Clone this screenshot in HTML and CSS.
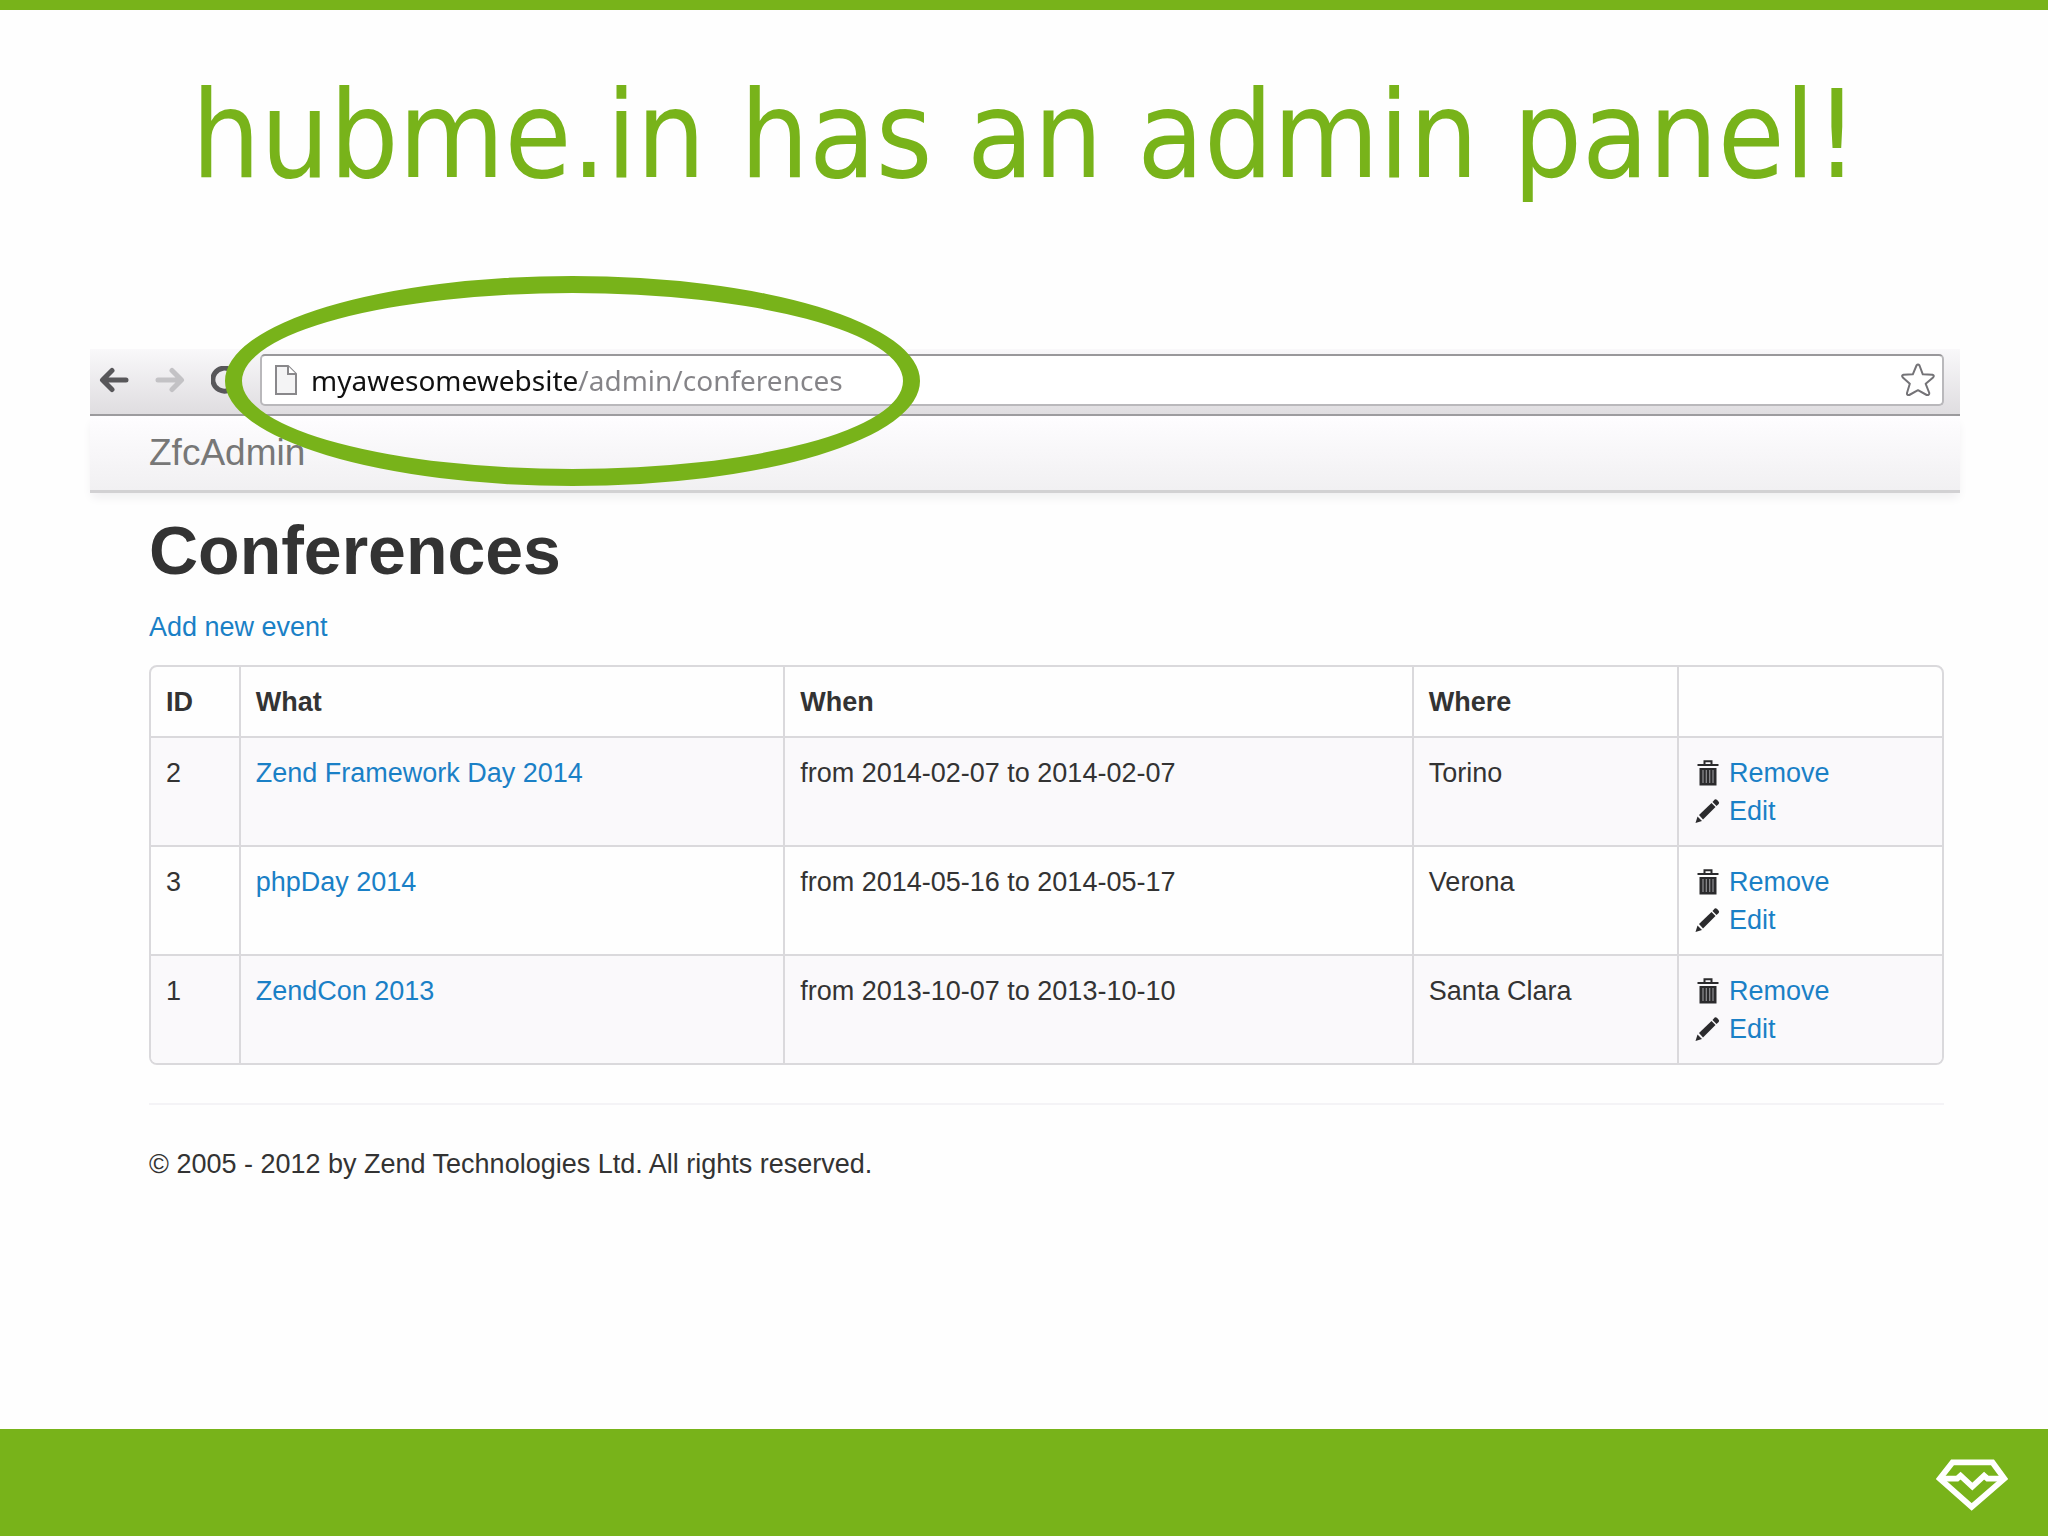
FILE: index.html
```html
<!DOCTYPE html>
<html lang="en">
<head>
    <meta charset="UTF-8">
    <meta name="viewport" content="width=device-width, initial-scale=1.0">
    <title>hubme.in has an admin panel!</title>
    <link rel="stylesheet" href="styles.css">
</head>
<body>
    <!-- shared icons -->
    <svg class="sprite" aria-hidden="true">
        <symbol id="trash" viewBox="0 0 24 26">
            <path d="M9 4V1.2h7V4" fill="none" stroke="#2b2b2d" stroke-width="2"/>
            <path d="M2 4h21v2H2z" fill="#2b2b2d"/>
            <path d="M4 8h17v17.500H4z" fill="#2b2b2d"/>
            <path d="M7.500 10v13M10.800 10v13M14.200 10v13M17.500 10v13" stroke="#8f8f93" stroke-width="1.200"/>
        </symbol>
        <symbol id="pencil" viewBox="0 0 24 26">
            <path d="M0 25l2-6.500 4.500 4.500z" fill="#2b2b2d"/>
            <path d="M3.500 17L16 5l4 4L7.500 21.500z" fill="#2b2b2d"/>
            <path d="M17 4l2.200-2.500q1-.8 2.200.3l1.600 1.700q1.200 1.200.2 2.400L21 8z" fill="#2b2b2d"/>
        </symbol>
    </svg>

    <main class="slide">
        <h1 class="slide-title">hubme.in has an admin panel!</h1>

        <div class="browser">
            <div class="toolbar">
                <button class="nav-btn" type="button" aria-label="Back">
                    <svg width="30" height="28" viewBox="0 0 30 28" fill="none" stroke="#58575a" stroke-width="5" stroke-linecap="round" stroke-linejoin="round">
                        <path d="M4 14h23M13 4.500L3.500 14l9.500 9.500"/>
                    </svg>
                </button>
                <button class="nav-btn" type="button" aria-label="Forward">
                    <svg width="30" height="28" viewBox="0 0 30 28" fill="none" stroke="#c3c2c5" stroke-width="5" stroke-linecap="round" stroke-linejoin="round">
                        <path d="M3 14h23M17 4.500l9.500 9.500-9.500 9.500"/>
                    </svg>
                </button>
                <button class="nav-btn" type="button" aria-label="Reload">
                    <svg width="30" height="28" viewBox="0 0 30 28" fill="none" stroke="#58575a" stroke-width="5">
                        <path d="M21 5A11.500 11.500 0 1 0 24 18"/>
                        <path d="M27 2v9h-9z" fill="#58575a" stroke="none"/>
                    </svg>
                </button>
                <div class="omnibox">
                    <svg width="22" height="30" viewBox="0 0 22 30" fill="#f4f4f5" stroke="#89888b" stroke-width="2" aria-hidden="true">
                        <path d="M1 1h12l8 8v20H1z"/>
                        <path d="M13 1v8h8" fill="#fff"/>
                    </svg>
                    <input class="url" type="text" aria-label="Address" value="myawesomewebsite/admin/conferences">
                    <button class="star" type="button" aria-label="Bookmark this page">
                        <svg width="34" height="34" viewBox="0 0 34 34" fill="#fff" stroke="#747377" stroke-width="2" stroke-linejoin="round">
                            <path d="M15.500 2.500q1.500-1.800 3 0l3.300 8.800 9.700.4q2.200.8.600 2.800l-7.400 6.300 3.600 9.200q0 2.600-2.600 2L17 27.200 8.300 32q-2.600.4-2.300-2l2.800-9.200-7-6.300q-1.600-2 .6-2.800l9.400-.4z"/>
                        </svg>
                    </button>
                </div>
            </div>

            <nav class="navbar">
                <a class="brand" href="#">ZfcAdmin</a>
            </nav>

            <div class="content">
                <h2>Conferences</h2>
                <a class="add-link" href="#">Add new event</a>

                <table class="events">
                    <colgroup>
                        <col class="col-id">
                        <col class="col-what">
                        <col class="col-when">
                        <col class="col-where">
                        <col>
                    </colgroup>
                    <thead>
                        <tr>
                            <th>ID</th>
                            <th>What</th>
                            <th>When</th>
                            <th>Where</th>
                            <th></th>
                        </tr>
                    </thead>
                    <tbody>
                        <tr>
                            <td>2</td>
                            <td><a href="#">Zend Framework Day 2014</a></td>
                            <td>from 2014-02-07 to 2014-02-07</td>
                            <td>Torino</td>
                            <td>
                                <div class="action"><svg><use href="#trash"/></svg><a href="#">Remove</a></div>
                                <div class="action"><svg><use href="#pencil"/></svg><a href="#">Edit</a></div>
                            </td>
                        </tr>
                        <tr>
                            <td>3</td>
                            <td><a href="#">phpDay 2014</a></td>
                            <td>from 2014-05-16 to 2014-05-17</td>
                            <td>Verona</td>
                            <td>
                                <div class="action"><svg><use href="#trash"/></svg><a href="#">Remove</a></div>
                                <div class="action"><svg><use href="#pencil"/></svg><a href="#">Edit</a></div>
                            </td>
                        </tr>
                        <tr>
                            <td>1</td>
                            <td><a href="#">ZendCon 2013</a></td>
                            <td>from 2013-10-07 to 2013-10-10</td>
                            <td>Santa Clara</td>
                            <td>
                                <div class="action"><svg><use href="#trash"/></svg><a href="#">Remove</a></div>
                                <div class="action"><svg><use href="#pencil"/></svg><a href="#">Edit</a></div>
                            </td>
                        </tr>
                    </tbody>
                </table>

                <hr>
                <p class="copyright">© 2005 - 2012 by Zend Technologies Ltd. All rights reserved.</p>
            </div>

            <!-- highlight around the address -->
            <div class="highlight"></div>
        </div>
    </main>

    <footer class="slide-footer">
        <svg width="72" height="52" viewBox="0 0 214 152" fill="none" stroke="#fff" stroke-width="17" role="img" aria-label="Logo">
            <path d="M49 9h119l35 48-97 84L11 57z"/>
            <path d="M11 57h52l10-9 35 33 35-33 10 9h50"/>
        </svg>
    </footer>
</body>
</html>
```
FILE: styles.css
```css
* {
    box-sizing: border-box;
}

body {
    margin: 0;
    min-height: 100vh;
    display: flex;
    flex-direction: column;
    background-color: #fefefe;
    border-top: 10px solid #78b31a;
    color: #333;
    font-family: "Liberation Sans", Arial, sans-serif;
    font-size: 27px;
    line-height: 38px;
}

a {
    color: #1a80c6;
    text-decoration: none;
}

button {
    padding: 0;
    border: none;
    background: none;
    cursor: pointer;
}

svg {
    display: block;
    flex: none;
}

.sprite {
    position: absolute;
    width: 0;
    height: 0;
}

.slide {
    flex: 1;
    padding: 54px 88px 40px 90px;
}

.slide-title {
    margin: 0 0 141px;
    color: #78b31a;
    font-family: "DejaVu Sans Condensed", "Noto Sans", sans-serif;
    font-size: 121px;
    font-weight: normal;
    line-height: 144px;
    text-align: center;
}

.browser {
    position: relative;
}

/* browser toolbar */
.toolbar {
    display: flex;
    align-items: center;
    gap: 26px;
    padding: 5px 16px 8px 9px;
    background: linear-gradient(#f9f8fa, #dfdde0);
    border-bottom: 2px solid #99989b;
}

.omnibox {
    flex: 1;
    display: flex;
    align-items: center;
    gap: 14px;
    height: 52px;
    margin-left: -7px;
    padding: 0 7px 0 13px;
    background-color: #fff;
    border: 2px solid #b9b8bb;
    border-top-color: #99989b;
    border-radius: 5px;
}

/* host is black, the path after it is grey */
.url {
    flex: 1;
    min-width: 0;
    padding: 0;
    border: none;
    outline: none;
    color: #858488;
    font-family: "Noto Sans", sans-serif;
    font-size: 28px;
    line-height: 38px;
    background: linear-gradient(to right, #111 268px, #858488 268px);
    -webkit-background-clip: text;
    background-clip: text;
    -webkit-text-fill-color: transparent;
}

/* page inside the browser */
.navbar {
    padding: 0 59px;
    background: linear-gradient(#fefdff, #f1f0f2);
    border-bottom: 3px solid #d2d1d3;
    box-shadow: 0 6px 10px -2px #eeedef;
}

.brand {
    color: #777;
    font-size: 37px;
    line-height: 74px;
}

.content {
    padding: 19px 16px 0 59px;
}

h2 {
    margin: 0 0 20px;
    font-size: 68px;
    line-height: 76px;
}

.add-link {
    display: block;
}

.events {
    width: 100%;
    margin-top: 19px;
    table-layout: fixed;
    border: 2px solid #dad9dc;
    border-radius: 8px;
    border-spacing: 0;
    overflow: hidden;
}

.col-id {
    width: 4.9%;
}

.col-what {
    width: 30.4%;
}

.col-when {
    width: 35.1%;
}

.col-where {
    width: 14.8%;
}

th,
td {
    padding: 16px 15px 15px;
    text-align: left;
    vertical-align: top;
}

th + th,
td + td {
    border-left: 2px solid #dad9dc;
}

td {
    border-top: 2px solid #dad9dc;
}

tbody tr:nth-child(odd) {
    background-color: #faf9fb;
}

.action {
    display: flex;
    align-items: center;
    gap: 8px;
}

.action svg {
    width: 27px;
    height: 26px;
}

hr {
    margin: 38px 0 40px;
    border: none;
    border-top: 2px solid #f4f3f6;
}

.copyright {
    margin: 0;
}

.highlight {
    position: absolute;
    left: 135px;
    top: -73px;
    width: 695px;
    height: 210px;
    border: 17px solid #78b31a;
    border-radius: 50%;
    pointer-events: none;
}

/* bottom band */
.slide-footer {
    display: flex;
    align-items: center;
    justify-content: flex-end;
    height: 107px;
    padding: 4px 40px 0;
    background-color: #78b31a;
}
```
